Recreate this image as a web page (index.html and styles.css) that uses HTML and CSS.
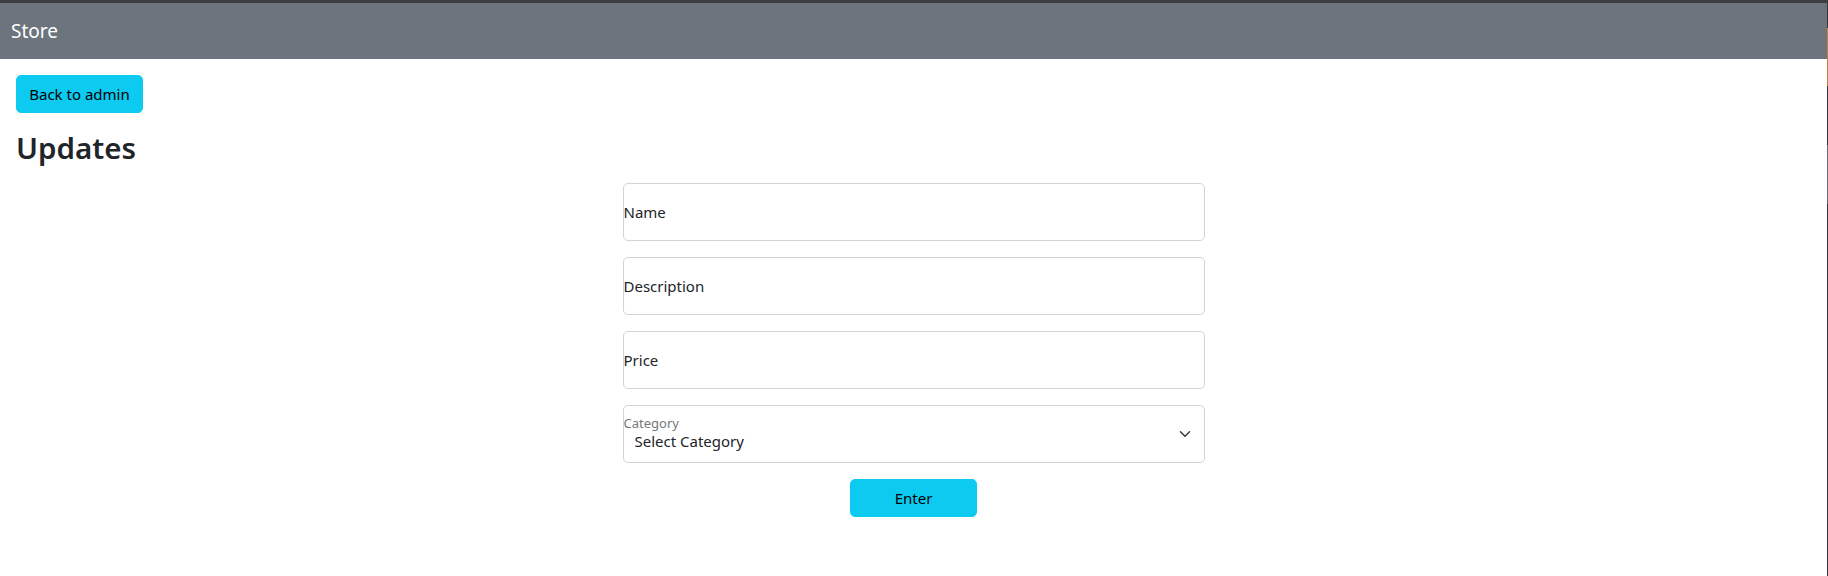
FILE: index.html
```html
<!DOCTYPE html>
<html lang="en">
<head>
<meta charset="utf-8">
<title>Store</title>
<link rel="stylesheet" href="styles.css">
</head>
<body>
<div class="window">
  <div class="page">
    <nav class="navbar"><span class="brand">Store</span></nav>
    <main class="content">
      <a class="btn btn-info btn-back" href="#">Back to admin</a>
      <h2 class="title">Updates</h2>
      <form class="form">
        <input class="field" type="text" placeholder="Name">
        <input class="field" type="text" placeholder="Description">
        <input class="field" type="text" placeholder="Price">
        <div class="field select-field">
          <label class="select-label" for="cat">Category</label>
          <select class="select" id="cat">
            <option>Select Category</option>
          </select>
          <svg class="chevron" width="12" height="12" viewBox="0 0 16 16" aria-hidden="true"><path d="m2 5 6 6 6-6" fill="none" stroke="#343a40" stroke-width="2" stroke-linecap="round" stroke-linejoin="round"/></svg>
        </div>
        <button class="btn btn-info btn-enter" type="button">Enter</button>
      </form>
    </main>
  </div>
  <div class="edge">
    <span class="edge-dark edge-a"></span>
    <span class="edge-orange"></span>
    <span class="edge-dark edge-b"></span>
    <span class="edge-gray"></span>
    <span class="edge-dark edge-c"></span>
  </div>
</div>
</body>
</html>
```

FILE: styles.css
```css
html, body {
  margin: 0;
  padding: 0;
  background: #ffffff;
}

body {
  font-family: "Noto Sans", "Open Sans", sans-serif;
  color: #212529;
  font-size: 15px;
}

.window {
  display: flex;
  border-top: 3px solid #3c3d3f;
  min-height: 573px;
}

.page {
  flex: 1;
  min-width: 0;
}

.navbar {
  height: 56px;
  background: #6c757d;
  display: flex;
  align-items: center;
  padding-left: 11px;
}

.brand {
  color: #ffffff;
  font-size: 19px;
  line-height: 30px;
}

.content {
  padding: 16px 16px 0 16px;
  display: flex;
  flex-direction: column;
  align-items: flex-start;
}

.btn {
  box-sizing: border-box;
  display: inline-flex;
  align-items: center;
  justify-content: center;
  height: 38px;
  width: 127px;
  border: 1px solid #0dcaf0;
  border-radius: 5px;
  background: #0dcaf0;
  color: #000000;
  font-family: "Noto Sans", "Open Sans", sans-serif;
  font-size: 15px;
  text-decoration: none;
  padding: 0;
}

.title {
  margin: 16px 0 0 0;
  font-size: 29.5px;
  line-height: 38px;
  font-weight: 600;
  color: #212529;
}

.form {
  align-self: center;
  width: 582px;
  margin-top: 16px;
  display: flex;
  flex-direction: column;
  gap: 16px;
}

.field {
  box-sizing: border-box;
  height: 58px;
  width: 100%;
  border: 1px solid #ced4da;
  border-radius: 5px;
  background: #ffffff;
  margin: 0;
  padding: 0;
  font-family: "Noto Sans", "Open Sans", sans-serif;
  font-size: 15px;
  color: #212529;
  outline: none;
}

.field::placeholder {
  color: #212529;
  opacity: 1;
}

.select-field {
  position: relative;
  display: flex;
  flex-direction: column;
  padding-top: 9px;
}

.select-label {
  font-size: 13px;
  line-height: 16px;
  color: #76787b;
}

.select {
  appearance: none;
  -webkit-appearance: none;
  border: none;
  background: transparent;
  font-family: "Noto Sans", "Open Sans", sans-serif;
  font-size: 15px;
  line-height: 20px;
  height: 20px;
  padding: 0 0 0 11px;
  margin: 0;
  color: #212529;
  outline: none;
}

.chevron {
  position: absolute;
  right: 13px;
  top: 22px;
}

.btn-enter {
  align-self: center;
}

.edge {
  width: 1px;
  display: flex;
  flex-direction: column;
}

.edge-dark {
  background: #333436;
}

.edge-a { height: 25px; }
.edge-orange { height: 58px; background: #c5803a; }
.edge-b { height: 59px; }
.edge-gray { height: 59px; background: #6b6c6e; }
.edge-c { flex: 1; }
```
